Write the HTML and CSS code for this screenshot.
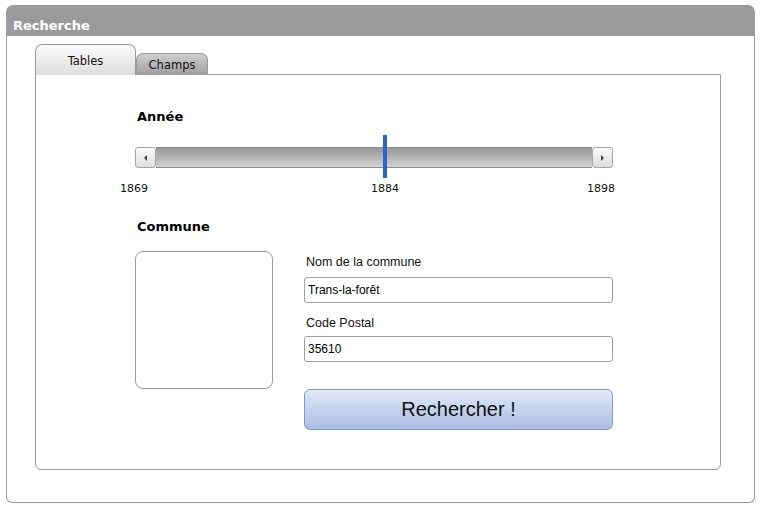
FILE: index.html
```html
<!DOCTYPE html>
<html lang="fr">
<head>
<meta charset="utf-8">
<title>Recherche</title>
<link rel="stylesheet" href="styles.css">
</head>
<body>
<div class="window">
  <div class="titlebar">Recherche</div>
  <div class="window-body">
    <div class="tabs">
      <div class="tab tab-active">Tables</div>
      <div class="tab">Champs</div>
    </div>
    <div class="tab-panel">
      <h2 class="section-title">Année</h2>
      <div class="slider">
        <div class="slider-track">
          <div class="slider-btn"><svg width="5" height="6" viewBox="0 0 5 6"><path d="M4 0 L1 3 L4 6 Z" fill="#444"/></svg></div>
          <div class="slider-rail"></div>
          <div class="slider-btn"><svg width="5" height="6" viewBox="0 0 5 6"><path d="M1 0 L4 3 L1 6 Z" fill="#444"/></svg></div>
          <div class="slider-thumb" style="left: 248px"></div>
        </div>
        <div class="slider-labels">
          <span class="slider-label" style="left: -15px">1869</span>
          <span class="slider-label" style="left: 236px">1884</span>
          <span class="slider-label" style="left: 452px">1898</span>
        </div>
      </div>
      <h2 class="section-title commune-title">Commune</h2>
      <div class="commune-row">
        <div class="commune-map"></div>
        <div class="commune-form">
          <label class="field-label">Nom de la commune</label>
          <input class="field-input" type="text" value="Trans-la-forêt">
          <label class="field-label field-label-second">Code Postal</label>
          <input class="field-input" type="text" value="35610">
          <button class="search-btn">Rechercher !</button>
        </div>
      </div>
    </div>
  </div>
</div>
</body>
</html>
```

FILE: styles.css
```css
* { box-sizing: border-box; }

html, body {
  margin: 0;
  padding: 0;
  background: #ffffff;
}

body {
  font-family: "DejaVu Sans", sans-serif;
  color: #000;
}

.window {
  margin: 5px 0 0 6px;
  width: 749px;
}

.titlebar {
  height: 31px;
  background: #9b9b9b;
  border-radius: 7px 7px 0 0;
  color: #ffffff;
  font-family: "DejaVu Sans", sans-serif;
  font-weight: bold;
  font-size: 13px;
  line-height: 20px;
  padding: 11px 0 0 7px;
}

.window-body {
  border: 1px solid #9a9a9a;
  border-top: none;
  border-radius: 0 0 6px 6px;
  padding: 9px 33px 32px 28px;
}

.tabs {
  display: flex;
  align-items: flex-end;
  height: 30px;
  position: relative;
  z-index: 1;
  margin-bottom: -1px;
}

.tab {
  width: 72px;
  height: 22px;
  border: 1px solid #999;
  border-bottom: none;
  border-radius: 7px 7px 0 0;
  background: linear-gradient(#cfcfcf, #9e9e9e);
  font-size: 11.5px;
  line-height: 21px;
  text-align: center;
  color: #111;
  padding-top: 1px;
}

.tab-active {
  width: 101px;
  height: 31px;
  background: linear-gradient(#fbfbfb, #dddddd);
  line-height: 28px;
  padding-top: 2px;
}

.tab-panel {
  border: 1px solid #999;
  border-radius: 0 0 6px 6px;
  height: 396px;
  padding: 34px 0 0 99px;
}

.section-title {
  margin: 0 0 0 2px;
  font-size: 13px;
  font-weight: bold;
  line-height: 16px;
}

.slider {
  margin-top: 22px;
  width: 478px;
}

.slider-track {
  position: relative;
  display: flex;
  height: 21px;
}

.slider-btn {
  width: 21px;
  height: 21px;
  border: 1px solid #a8a8a8;
  border-radius: 3px;
  background: linear-gradient(#fafafa, #dedede);
  display: flex;
  align-items: center;
  justify-content: center;
}

.slider-rail {
  flex: 1;
  background: linear-gradient(#989898, #d2d2d2);
  border-top: 1px solid #8e8e8e;
  border-bottom: 1px solid #8e8e8e;
}

.slider-thumb {
  position: absolute;
  top: -12px;
  width: 4px;
  height: 43px;
  background: #2c63c7;
}

.slider-labels {
  position: relative;
  height: 13px;
  margin-top: 14px;
}

.slider-label {
  position: absolute;
  top: 0;
  font-size: 11px;
  line-height: 13px;
  color: #111;
}

.commune-title {
  margin-top: 24px;
}

.commune-row {
  display: flex;
  margin-top: 16px;
  gap: 31px;
}

.commune-map {
  width: 138px;
  height: 138px;
  border: 1px solid #999;
  border-radius: 8px;
}

.commune-form {
  display: flex;
  flex-direction: column;
  width: 309px;
  padding-top: 4px;
  font-family: "Liberation Sans", Arial, sans-serif;
}

.field-label {
  font-size: 12.5px;
  line-height: 15px;
  padding-left: 2px;
  color: #111;
}

.field-label-second {
  margin-top: 13px;
}

.field-input {
  margin: 7px 0 0 0;
  height: 26px;
  width: 309px;
  border: 1px solid #a0a0a0;
  border-radius: 3px;
  padding: 0 3px;
  font-family: "Liberation Sans", Arial, sans-serif;
  font-size: 12px;
  color: #000;
  background: #fff;
  outline: none;
}

.field-label-second + .field-input {
  margin-top: 5px;
}

.search-btn {
  margin-top: 27px;
  height: 41px;
  width: 309px;
  border: 1px solid #8298c6;
  border-radius: 6px;
  background: linear-gradient(#e1e9f8, #a8bde3);
  font-family: "Liberation Sans", Arial, sans-serif;
  font-size: 20px;
  color: #111;
  padding: 0;
  cursor: pointer;
}
```
